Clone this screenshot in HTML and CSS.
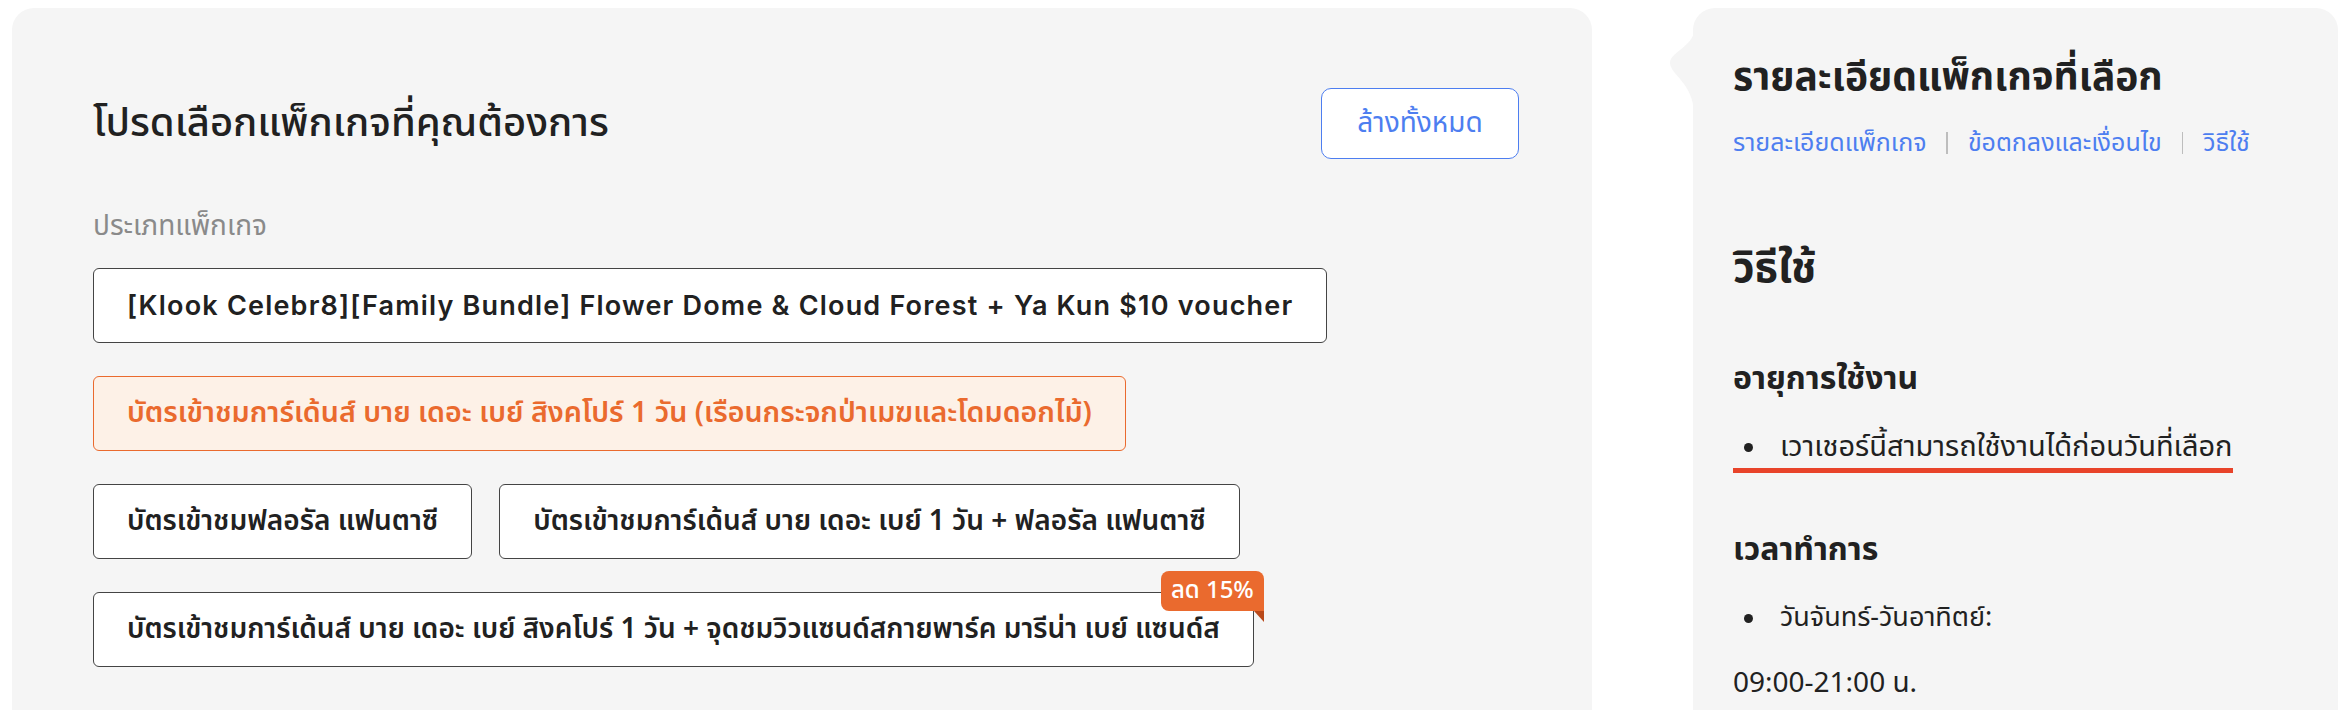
FILE: index.html
```html
<!DOCTYPE html>
<html>
<head>
  <meta charset="utf-8">
  <title>เลือกแพ็กเกจ</title>
  <link rel="stylesheet" href="styles.css">
</head>
<body>
  <div class="page">

    <!-- เลือกแพ็กเกจ -->
    <div class="packages">
      <div class="packages-head">
        <h2>โปรดเลือกแพ็กเกจที่คุณต้องการ</h2>
        <button class="clear-btn">ล้างทั้งหมด</button>
      </div>

      <div class="label">ประเภทแพ็กเกจ</div>

      <div class="options">
        <div class="row">
          <div class="option latin">[Klook Celebr8][Family Bundle] Flower Dome &amp; Cloud Forest + Ya Kun $10 voucher</div>
        </div>
        <div class="row">
          <div class="option selected">บัตรเข้าชมการ์เด้นส์ บาย เดอะ เบย์ สิงคโปร์ 1 วัน (เรือนกระจกป่าเมฆและโดมดอกไม้)</div>
        </div>
        <div class="row">
          <div class="option">บัตรเข้าชมฟลอรัล แฟนตาซี</div>
          <div class="option">บัตรเข้าชมการ์เด้นส์ บาย เดอะ เบย์ 1 วัน + ฟลอรัล แฟนตาซี</div>
        </div>
        <div class="row">
          <div class="option">บัตรเข้าชมการ์เด้นส์ บาย เดอะ เบย์ สิงคโปร์ 1 วัน + จุดชมวิวแซนด์สกายพาร์ค มารีน่า เบย์ แซนด์ส
            <span class="badge">ลด 15%</span>
          </div>
        </div>
      </div>
    </div>

    <!-- รายละเอียด -->
    <div class="details">
      <svg class="notch" width="24" height="84" viewBox="0 0 24 84">
        <path d="M24 0 C24 16 0 22 0 33 C0 44 24 54 24 84 Z" fill="#f5f5f5"/>
      </svg>
      <h3 class="details-title">รายละเอียดแพ็กเกจที่เลือก</h3>
      <div class="tabs">
        <a>รายละเอียดแพ็กเกจ</a>
        <span class="sep"></span>
        <a>ข้อตกลงและเงื่อนไข</a>
        <span class="sep"></span>
        <a>วิธีใช้</a>
      </div>

      <h3 class="section-title">วิธีใช้</h3>

      <h4 class="sub-title">อายุการใช้งาน</h4>
      <div class="highlight">
        <div class="item"><span class="dot"></span>เวาเชอร์นี้สามารถใช้งานได้ก่อนวันที่เลือก</div>
      </div>

      <h4 class="sub-title hours">เวลาทำการ</h4>
      <div class="item spaced small"><span class="dot"></span>วันจันทร์-วันอาทิตย์:</div>
      <p class="plain">09:00-21:00 น.</p>
    </div>

  </div>
</body>
</html>
```

FILE: styles.css
```css
body {
  margin: 0;
  padding: 0;
  background-color: #fff;
  font-family: "Noto Sans Thai", "Noto Sans", "DejaVu Sans", sans-serif;
  color: #212121;
}

.page {
  display: flex;
  align-items: flex-start;
  padding: 8px 6px 0 12px;
}

/* กล่องเลือกแพ็กเกจ */
.packages {
  width: 1580px;
  height: 702px;
  box-sizing: border-box;
  background-color: #f5f5f5;
  border-radius: 22px 22px 0 0;
  padding: 80px 73px 0 81px;
}

.packages-head {
  display: flex;
  justify-content: space-between;
  align-items: center;
  height: 71px;
}

.packages-head h2 {
  margin: 0;
  font-size: 40px;
  font-weight: 500;
  color: #212121;
}

.clear-btn {
  width: 198px;
  height: 71px;
  background-color: #fff;
  border: 1.5px solid #4d7ef0;
  border-radius: 10px;
  color: #4d7ef0;
  font-family: inherit;
  font-size: 28px;
  cursor: pointer;
}

.label {
  margin-top: 50px;
  line-height: 36px;
  font-size: 28px;
  color: #8a8a8a;
}

.options {
  margin-top: 23px;
  display: flex;
  flex-direction: column;
  gap: 33px;
}

.row {
  display: flex;
  gap: 27px;
}

.option {
  position: relative;
  display: flex;
  align-items: center;
  height: 75px;
  box-sizing: border-box;
  padding: 0 33px;
  background-color: #fff;
  border: 1.5px solid #444;
  border-radius: 6px;
  font-size: 28px;
  font-weight: 600;
  color: #212121;
  white-space: nowrap;
}

.option.latin {
  font-family: "Inter", sans-serif;
  font-size: 27px;
  letter-spacing: 1.2px;
}

.option.selected {
  background-color: #fdf1e7;
  border-color: #ea6a2e;
  color: #ea6a2e;
  font-size: 28.6px;
}

.badge {
  position: absolute;
  top: -22px;
  right: -11px;
  height: 40px;
  padding: 0 10px;
  display: flex;
  align-items: center;
  background-color: #ea6a2e;
  color: #fff;
  font-size: 24px;
  font-weight: 500;
  border-radius: 8px 8px 0 8px;
}

.badge::after {
  content: "";
  position: absolute;
  right: 0;
  top: 40px;
  border-top: 11px solid #b9491a;
  border-left: 10px solid transparent;
}

/* รายละเอียดแพ็กเกจ */
.details {
  position: relative;
  margin-left: 101px;
  width: 645px;
  height: 702px;
  box-sizing: border-box;
  background-color: #f5f5f5;
  border-radius: 22px 22px 0 0;
  padding: 47px 20px 0 40px;
}

.notch {
  position: absolute;
  left: -23px;
  top: 22px;
}

.details-title {
  margin: 0;
  font-size: 39px;
  line-height: 48px;
  font-weight: 700;
}

.tabs {
  margin-top: 24px;
  display: flex;
  align-items: center;
  gap: 20px;
  line-height: 32px;
  font-size: 25px;
}

.tabs a {
  color: #4d7ef0;
  cursor: pointer;
}

.sep {
  width: 1.5px;
  height: 22px;
  background-color: #bdbdbd;
}

.section-title {
  margin: 86px 0 0;
  font-size: 42px;
  line-height: 48px;
  font-weight: 700;
}

.sub-title {
  margin: 66px 0 0;
  font-size: 32px;
  line-height: 40px;
  font-weight: 700;
}

.sub-title.hours {
  margin-top: 57px;
}

.highlight {
  display: inline-block;
  margin-top: 30px;
  padding-bottom: 3px;
  border-bottom: 5px solid #e8432a;
}

.item {
  display: flex;
  align-items: center;
  font-size: 29px;
  line-height: 36px;
}

.item.spaced {
  margin-top: 30px;
}

.item.small {
  font-size: 27px;
}

.dot {
  width: 9px;
  height: 9px;
  margin: 0 27px 0 11px;
  border-radius: 50%;
  background-color: #212121;
}

.plain {
  margin: 30px 0 0;
  font-size: 28px;
  line-height: 36px;
}
```
